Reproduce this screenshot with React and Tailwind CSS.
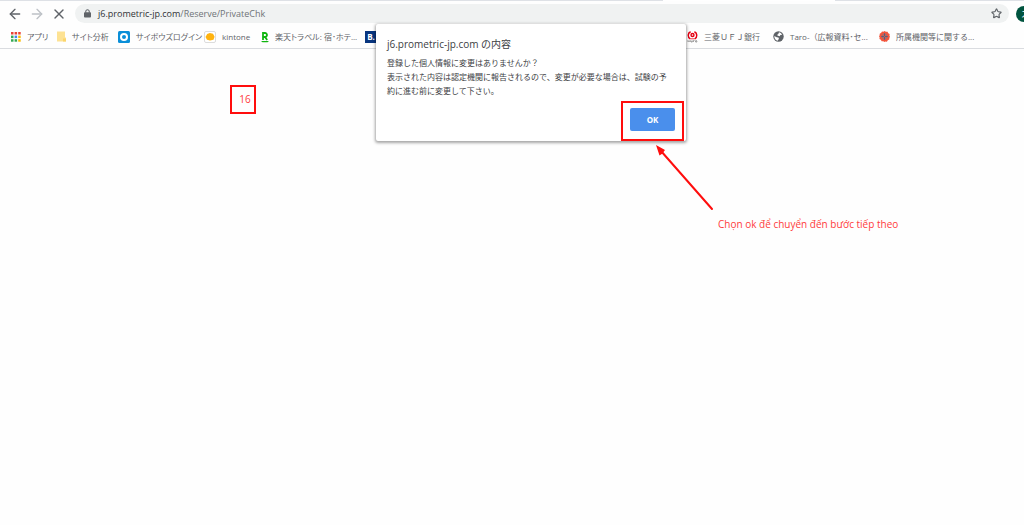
import React from "react";
import { ArrowLeft, ArrowRight, X, Star } from "lucide-react";

const AppsIcon = () => (
  <svg viewBox="0 0 10 10" className="h-[10px] w-[10px] shrink-0">
    {["#ea4335", "#ea4335", "#ea4335", "#34a853", "#4285f4", "#fbbc05", "#34a853", "#34a853", "#fbbc05"].map(
      (color, i) => (
        <rect key={i} x={(i % 3) * 3.6} y={Math.floor(i / 3) * 3.6} width="2.5" height="2.5" fill={color} />
      )
    )}
  </svg>
);

const FolderIcon = () => (
  <svg viewBox="0 0 9 11" className="h-[11px] w-[9px] shrink-0">
    <path d="M0 .5h8v6h1v4H0z" fill="#fde293" />
    <path d="M6 7.500h3v3H6z" fill="#fbd56b" />
  </svg>
);

const CybozuIcon = () => (
  <svg viewBox="0 0 12 12" className="h-3 w-3 shrink-0">
    <rect width="12" height="12" rx="1.5" fill="#0b8fd8" />
    <circle cx="6" cy="6" r="3" fill="none" stroke="#fff" strokeWidth="2" />
  </svg>
);

const KintoneIcon = () => (
  <svg viewBox="0 0 12 12" className="h-3 w-3 shrink-0">
    <rect x=".5" y=".5" width="11" height="11" rx="1.5" fill="#fff" stroke="#dcdcdc" />
    <path d="M3.200 3l2.600-1 3.200.8 1.600 3-1.100 3-3.500.8-3-.8L1.500 6z" fill="#ffb30f" />
  </svg>
);

const RakutenIcon = () => (
  <svg viewBox="0 0 8 12" className="h-3 w-2 shrink-0">
    <path d="M2 9V2h2a2 2 0 010 4H2m2 0l2.200 3" fill="none" stroke="#10b510" strokeWidth="1.800" />
    <path d="M0 10h8l-1.500 1.200h-5z" fill="#10b510" />
  </svg>
);

const BookingIcon = () => (
  <span className="flex h-3 w-3 shrink-0 items-center justify-center bg-[#08357f] text-[8px] font-bold text-white">
    B.
  </span>
);

const MufgIcon = () => (
  <svg viewBox="0 0 11 12" className="h-3 w-[11px] shrink-0">
    <g fill="none" stroke="#e60012">
      <path d="M3.600.7A4 4 0 003.200 7.800M7.400.7A4 4 0 017.800 7.800" strokeWidth="1.500" />
      <circle cx="5.500" cy="4" r="1.500" strokeWidth="1.400" />
      <path d="M3.200 7.800h4.600" strokeWidth=".8" />
    </g>
    <path d="M1 11V9.500l1 1 1-1V11M4 9.500V11h1.300V9.500M6.500 11V9.500h1M10 9.700H8.600V11H10v-.7" fill="none" stroke="#666" strokeWidth=".6" />
  </svg>
);

const GlobeIcon = () => (
  <svg viewBox="0 0 11 11" className="h-[11px] w-[11px] shrink-0">
    <circle cx="5.500" cy="5.500" r="5.200" fill="#5f6368" />
    <path d="M1.300 5l2.400 1.200 1.800.2.400 1.400-1.200 2C2.800 9.500 1.200 7.500 1.300 5z" fill="#fff" />
    <path d="M6 1.300l1.800.6 1.400 1.800-1.900.3-.4 1.200-1.900-.4-1-.9 1.300-.9z" fill="#fff" />
  </svg>
);

const WheelIcon = () => (
  <svg viewBox="0 0 12 12" className="h-[11px] w-[11px] shrink-0">
    <path d="M6 0l1.500.9L9.300.8l.8 1.600 1.500 1-.2 1.700.6 1.100-.7 1.500-.1 1.700-1.600.8-1 1.500-1.700-.2L6 12l-1.300-.9-1.800.1-.9-1.600-1.500-1 .2-1.800L0 6l.7-1.300.1-1.800 1.600-.9L3.300.6l1.500.2z" fill="#f2553c" />
    <circle cx="6" cy="6" r="3.200" fill="#a9686a" />
    <path d="M6 2.500v7M2.500 6h7" stroke="#4d6080" strokeWidth="1" />
    <path d="M3.800 3.800l4.400 4.400M8.200 3.800L3.800 8.200" stroke="#f2553c" strokeWidth=".6" />
  </svg>
);

const LockIcon = () => (
  <svg viewBox="0 0 8 10" className="h-[9px] w-[7px] shrink-0">
    <rect y="3.500" width="8" height="6" rx="1" fill="#5f6368" />
    <path d="M2 4V2.700a2 2 0 014 0V4" fill="none" stroke="#5f6368" strokeWidth="1.200" />
  </svg>
);

const leftBookmarks = [
  { label: "アプリ", icon: <AppsIcon />, width: "w-[46px]" },
  { label: "サイト分析", icon: <FolderIcon />, width: "w-[61px]" },
  { label: "サイボウズログイン", icon: <CybozuIcon />, width: "w-[86px]" },
  { label: "kintone", icon: <KintoneIcon />, width: "w-[57px]" },
  { label: "楽天トラベル: 宿･ホテ...", icon: <RakutenIcon />, width: "w-[104px]" },
  { label: "", icon: <BookingIcon />, width: "w-[12px]" },
];

const rightBookmarks = [
  { label: "三菱ＵＦＪ銀行", icon: <MufgIcon />, width: "w-[86px]" },
  { label: "Taro-（広報資料･セ...", icon: <GlobeIcon />, width: "w-[106px]" },
  { label: "所属機関等に関する...", icon: <WheelIcon />, width: "w-[106px]" },
];

const Bookmark = ({ label, icon, width }) => (
  <a
    href="#"
    aria-label={label || "Booking"}
    className={`flex shrink-0 items-center gap-[6px] whitespace-nowrap text-[8px] text-[#5f6368] ${width}`}
  >
    {icon}
    {label && <span>{label}</span>}
  </a>
);

const Toolbar = () => (
  <div className="flex h-[23px] items-center pl-[7px]">
    <div className="flex shrink-0 items-center gap-[6px] pr-2">
      <button aria-label="Back" className="text-[#5f6368]">
        <ArrowLeft size={16} strokeWidth={2} />
      </button>
      <button aria-label="Forward" className="text-[#bdc1c6]">
        <ArrowRight size={16} strokeWidth={2} />
      </button>
      <button aria-label="Stop" className="text-[#5f6368]">
        <X size={16} strokeWidth={2} />
      </button>
    </div>
    <div className="flex h-[19px] min-w-0 flex-1 items-center rounded-full bg-[#f0f2f2] pr-[7px] pl-[9px]">
      <LockIcon />
      <span className="ml-[7px] flex-1 text-[9px] text-[#6f7377]">
        <span className="text-[#303236]">j6.prometric-jp.com</span>/Reserve/PrivateChk
      </span>
      <button aria-label="Bookmark this page" className="text-[#5f6368]">
        <Star size={11} strokeWidth={2.5} />
      </button>
    </div>
    <div className="ml-[7px] w-2 shrink-0 overflow-hidden">
      <button aria-label="Profile" className="flex h-4 w-4 items-center rounded-full bg-[#00543f] pl-[5px] text-[8px] text-white">
        ス
      </button>
    </div>
  </div>
);

const Dialog = () => (
  <div
    role="dialog"
    aria-labelledby="dialog-title"
    className="absolute top-6 left-[376px] w-[310px] rounded-[2px] bg-white px-[11px] pt-[12px] pb-[10px] shadow-[0_1px_3px_1px_rgba(0,0,0,0.35)]"
  >
    <h1 id="dialog-title" className="text-[10px] leading-[16px] text-[#3c4043]">
      j6.prometric-jp.com の内容
    </h1>
    <p className="mt-1 text-[8px] leading-[14px] text-[#3c4043]">
      登録した個人情報に変更はありませんか？
      <br />
      表示された内容は認定機関に報告されるので、変更が必要な場合は、試験の予
      <br />
      約に進む前に変更して下さい。
    </p>
    <div className="mt-[10px] flex justify-end">
      <button className="h-[23px] w-[45px] rounded-[2px] bg-[#4a8fec] text-[8px] font-bold text-white">OK</button>
    </div>
  </div>
);

// Red marks and notes drawn over the page
const Annotations = () => (
  <div className="pointer-events-none text-[10px] text-[#ff3b3b]">
    <div className="absolute top-[85px] left-[230px] flex h-[29px] w-[26px] items-center justify-center border-2 border-[#ff0d0d] pl-1">
      16
    </div>
    <div className="absolute top-[101px] left-[621px] h-10 w-[63px] border-2 border-[#ff0d0d]" />
    <svg viewBox="0 0 60 68" className="absolute top-[144px] left-[655px] h-[68px] w-[60px]">
      <path d="M57 65L6 7" stroke="#ff0d0d" strokeWidth="2" strokeLinecap="round" />
      <path d="M1 1l9 5-1.500 2-1 1.500-3 2z" fill="#ff0d0d" />
    </svg>
    <p className="absolute top-[216px] left-[718px] leading-4 whitespace-nowrap">
      Chọn ok để chuyển đến bước tiếp theo
    </p>
  </div>
);

const App = () => {
  return (
    <div className="relative min-h-screen overflow-hidden bg-[#fefefe] font-['Open_Sans','Noto_Sans_CJK_JP',sans-serif]">
      <header className="border-b border-[#dadce0]">
        <div className="flex h-[1px] bg-[#dee1e6]">
          <div className="ml-[663px] w-[172px] bg-white" />
        </div>
        <div className="pt-[1px]">
          <Toolbar />
        </div>
        <nav className="flex h-[23px] items-center pl-[11px]">
          <div className="flex shrink-0 [font-feature-settings:'palt']">
            {leftBookmarks.map((item) => (
              <Bookmark key={item.label} {...item} />
            ))}
          </div>
          <div className="w-[310px] shrink-0" />
          {rightBookmarks.map((item) => (
            <Bookmark key={item.label} {...item} />
          ))}
        </nav>
      </header>
      <Dialog />
      <Annotations />
    </div>
  );
};

export default App;
